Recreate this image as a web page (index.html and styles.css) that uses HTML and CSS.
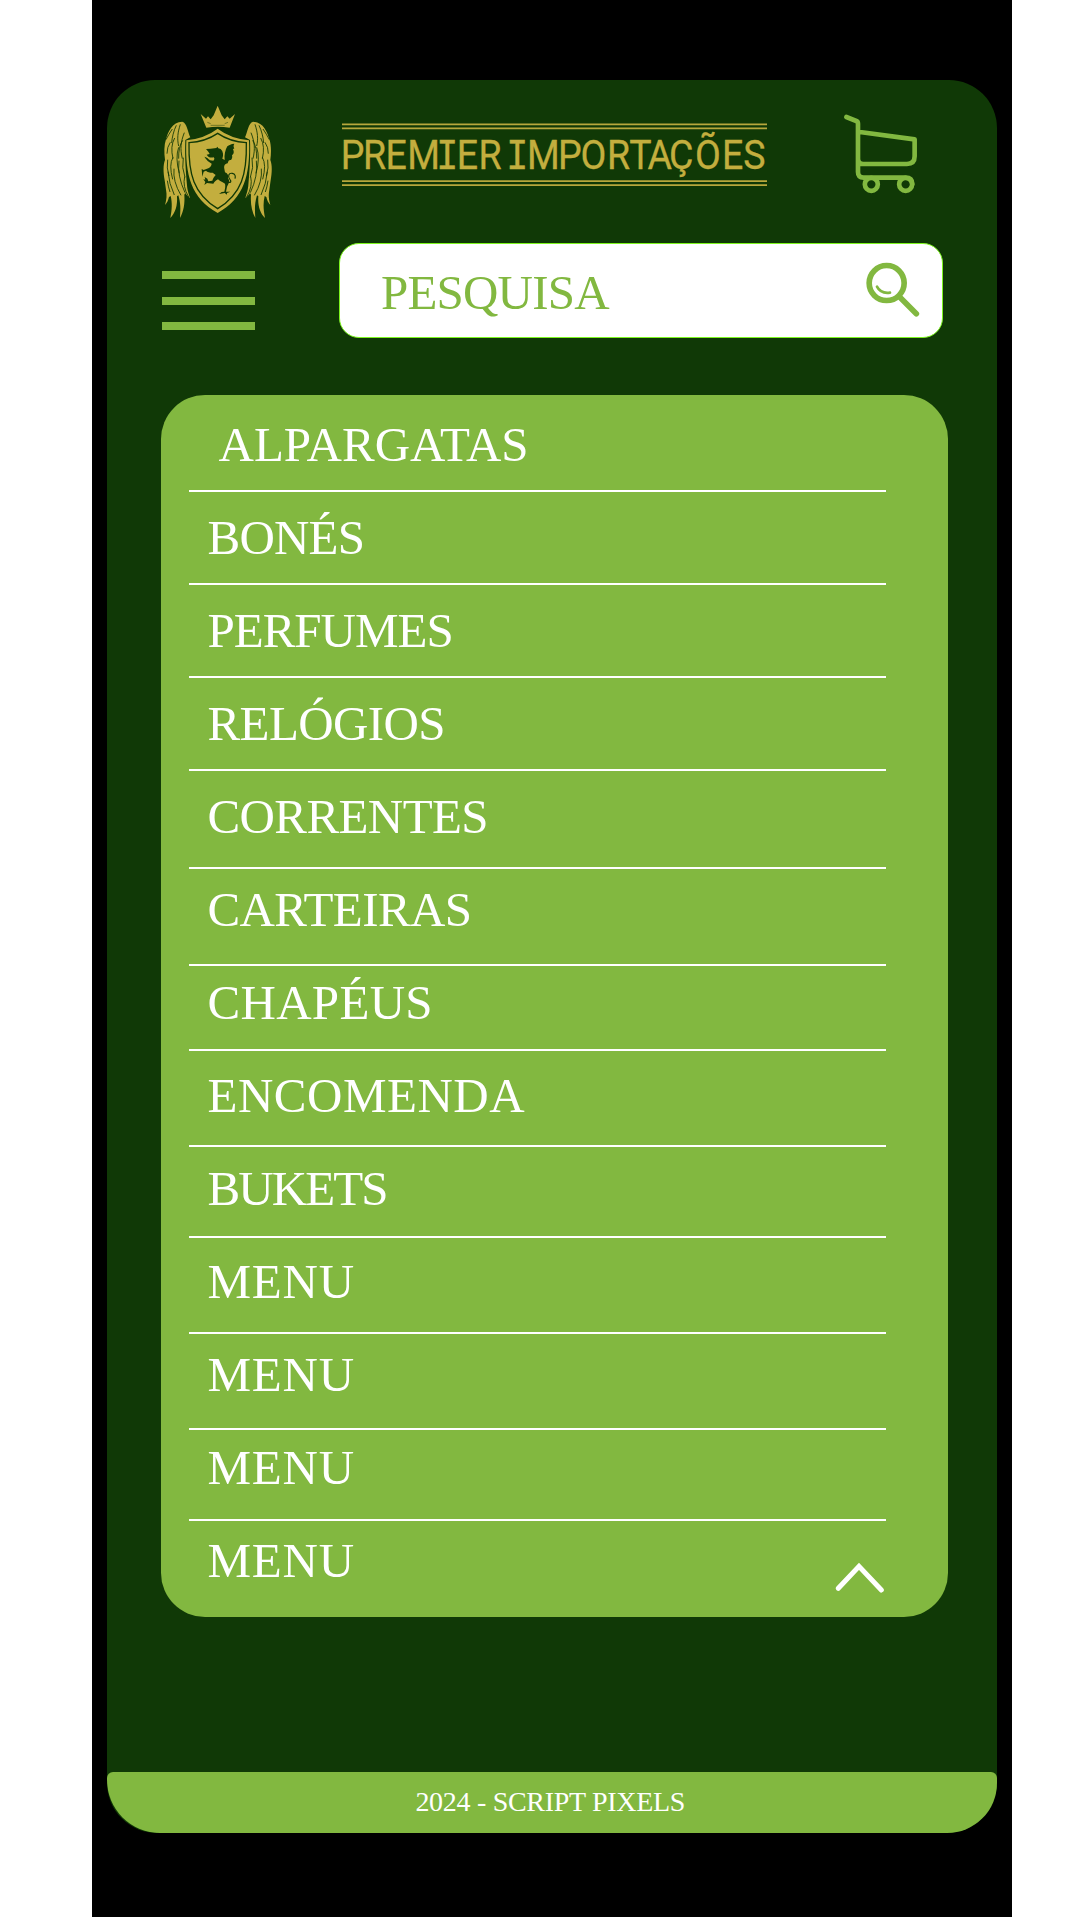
FILE: index.html
```
<!DOCTYPE html>
<html lang="pt-BR">
<head>
<meta charset="utf-8">
<title>Premier Importações</title>
<link rel="stylesheet" href="styles.css">
</head>
<body>
<div class="device">
  <div class="screen">
    <header class="header">
      <svg class="crest" viewBox="0 0 408 408" aria-hidden="true">
        <g fill="#c3ae3e">
          <path d="M152 72l16 14 6-7 8 9 9-12 12-29 12 29 9 12 8-9 7 7 16-14-16 41q-35-5-70 0z"/>
          <g id="wing">
            <path d="M97 95c14 4 16 30 24 47l-15 8c-2 55 2 100 5 135 1 15 4 22 9 39-7-5-11-10-14-15l-3 5c2 26-2 50-13 70 2-28 2-44-5-68l-4 3c2 28-5 50-20 65 5-26 6-45 1-66l-5 3c-2 10-6 18-12 24 5-17 6-30 3-46l-4-28c-4-24-5-46 1-61-3-22-3-45 3-62 6-22 18-52 49-53z"/>
            <path fill="none" stroke="#103906" stroke-width="2.6" d="M91 103c-8 24-10 44-5 65M79 106c-8 16-13 37-14 53M67 117c-8 12-14 22-19 32M103 128c-11 28-13 48-6 78M98 151q-13 20-12 55M74 144q-14 25-5 62M61 157q-10 14-10 34M86 172q-11 32 2 78M69 202q-13 22-1 66M100 203q-6 30 5 59M53 209q-4 25 4 49M87 212q-6 45 18 96M72 236q-4 38 21 80M54 245q3 36 19 70M104 260q-7 29 12 61M52 272q3 20 8 34"/>
          </g>
          <use href="#wing" transform="translate(406 0) scale(-1 1)"/>
          <path d="M203 116q38 29 94 35c4 105-14 173-94 218-80-45-98-113-94-218q56-6 94-35z"/>
        </g>
        <path d="M203 130q37 25 86 28c2 93-13 153-86 198-73-45-88-105-86-198q49-3 86-28z" fill="none" stroke="#103906" stroke-width="4"/>
        <path fill="#103906" d="M168 177l14-1 17-2 3-4 3 5 7 2c8 8 9 18 5 29l7 4c-2-15 2-31 8-41 5-4 11-7 21-8-3 5-3 10 0 14l-4 3c3 6 3 11 0 15l-3 3c2 6 0 10-3 14-6-1-8 2-10 10-7 1-12 6-10 16l2 11c9 4 11 10 9 18 5 7 5 12-3 25l-3 15 13 0-10 4 0 5-7-5-17 3 8-6 8-1c2-10 4-16 2-24-10-6-17-8-21-13-5 2-11 7-14 13l-19-2-8 6 3-9-6-8 6 1-2-8 8 5 3 8 12-2c2-8 6-12 10-17l-9-7c-9 0-16-2-20-6l-7 3-4 15-2-23 6 3 14-5c6-3 9-7 10-14l-12-8c-4-5-8-10-10-13 6 1 12 6 17 11l10 1c4-4 4-7 1-10-11 2-16-1-21-8l9-2-4-7z"/>
        <path d="M228 270c9 12 19 7 12-1-8-10-4-21 7-19 9 2 10 9 8 16" fill="none" stroke="#103906" stroke-width="3.5"/>
        <path d="M172 97l10 4M234 97l-10 4M182 106h42" fill="none" stroke="#103906" stroke-width="1.4"/>
      </svg>
      <svg class="brand" viewBox="342 120 425 70">
        <path class="rules" d="M342 124.4h425M342 128.4h425M342 181.2h425M342 185.2h425"/>
        <g transform="scale(.92 1)">
          <text class="wordmark" y="169" x="370.5 394.5 418.9 442.8 474.1 496.6 520">PREM<tspan class="slab">I</tspan>ER</text>
          <text class="wordmark" y="169" x="550.2 572.7 606.4 631 659.7 683.9 703.9 727.2 755.4 784.7 807.9"><tspan class="slab">I</tspan>MPORTAÇÕES</text>
        </g>
      </svg>
      <svg class="cart" viewBox="60 60 250 260" role="img" aria-label="Carrinho">
        <g fill="none" stroke="#82b840" stroke-width="14" stroke-linecap="round" stroke-linejoin="round">
          <path d="M79 81l30 12q5 2 5 8v145q0 17 17 17h126q20 0 20 20M114 125l170 23v51q0 23-23 23H130q-16 0-16-16"/>
          <circle cx="154" cy="283" r="19.5"/>
          <circle cx="257" cy="283" r="19.5"/>
        </g>
      </svg>
    </header>

    <div class="toolbar">
      <div class="burger"><i></i><i></i><i></i></div>
      <div class="search">
        <span class="search-label">PESQUISA</span>
        <svg class="lens" viewBox="195 95 165 170" aria-hidden="true">
          <g fill="none" stroke="#82b840" stroke-linecap="round">
            <circle cx="260" cy="161" r="52.5" stroke-width="17"/>
            <path d="M302 206l47 47" stroke-width="17"/>
            <path d="M231 172q11 22 39 18" stroke-width="8"/>
          </g>
        </svg>
      </div>
    </div>

    <nav class="menu">
      <ul>
        <li><span>ALPARGATAS</span></li>
        <li><span>BONÉS</span></li>
        <li><span>PERFUMES</span></li>
        <li><span>RELÓGIOS</span></li>
        <li><span>CORRENTES</span></li>
        <li><span>CARTEIRAS</span></li>
        <li><span>CHAPÉUS</span></li>
        <li><span>ENCOMENDA</span></li>
        <li><span>BUKETS</span></li>
        <li><span>MENU</span></li>
        <li><span>MENU</span></li>
        <li><span>MENU</span></li>
        <li><span>MENU</span>
          <svg class="chevron" viewBox="102 186 150 93" aria-hidden="true"><path d="M112 265l62-66 67 71" fill="none" stroke="#fff" stroke-width="15" stroke-linecap="round"/></svg>
        </li>
      </ul>
    </nav>

    <footer class="footer"><span>2024 - SCRIPT PIXELS</span></footer>
  </div>
</div>
</body>
</html>
```
FILE: styles.css
```
* { box-sizing: border-box; }

body {
  margin: 0;
  background: #fff;
  font-family: "Palatino Linotype", "Book Antiqua", "Liberation Serif", serif;
}

.device {
  width: 920.5px;
  height: 1916.5px;
  margin-left: 91.5px;
  padding: 80px 15.5px 84px 15.5px;
  background: #000;
}

.screen {
  display: flex;
  flex-direction: column;
  height: 1752.5px;
  border-radius: 48px 48px 50px 50px;
  background: #103906;
  overflow: hidden;
}

.header {
  display: flex;
  height: 162.5px;
  padding: 10px 0 0 43px;
}

.crest { width: 136px; height: 136px; }

.brand { width: 425px; height: 70px; margin: 30px 73px 0 56px; }
.rules { fill: none; stroke: #b7a83c; stroke-width: 1.8; }
.wordmark { font: 40.8px Roboto, sans-serif; fill: #c3ae3e; stroke: #c3ae3e; stroke-width: 0.3px; }
.slab { font: 39.8px "DejaVu Sans Mono", monospace; }

.cart { width: 83.3px; height: 86.7px; margin-top: 20px; }

.toolbar { display: flex; height: 95.5px; padding-left: 54.5px; }

.burger {
  display: flex;
  flex-direction: column;
  justify-content: space-between;
  width: 93.5px;
  height: 59px;
  margin: 28.5px 84px 0 0;
}
.burger i { height: 8px; background: #82b840; }

.search {
  display: flex;
  align-items: flex-start;
  justify-content: space-between;
  width: 604px;
  padding: 20px 22px 0 41px;
  border: 1px solid #7df51e;
  border-radius: 20px;
  background: #fff;
}
.search-label { color: #82b840; font-size: 49px; line-height: 58px; letter-spacing: -0.8px; }
.lens { width: 55px; height: 56.7px; margin-top: -2.5px; }

.menu {
  width: 787.5px;
  height: 1221.5px;
  margin: 57px 0 0 53.5px;
  padding: 0 62px 0 28.5px;
  border-radius: 44px;
  background: #82b840;
}
.menu ul {
  display: grid;
  grid-template-rows: 97px 93px 93px 93px 98px 97px 85px 96px 91px 96px 96px 91px 95px;
  margin: 0;
  padding: 0;
  list-style: none;
}
.menu li {
  display: flex;
  align-items: flex-start;
  justify-content: space-between;
  padding: 18px 0 0 18.5px;
  border-bottom: 2px solid #fff;
  color: #fff;
  font-size: 49px;
  line-height: 56px;
  letter-spacing: 0.8px;
}
.menu li:last-child { border-bottom: 0; }
.menu li:nth-child(1) { padding: 22px 0 0 29.5px; letter-spacing: 0; }
.menu li:nth-child(2) { letter-spacing: -0.8px; }
.menu li:nth-child(3) { letter-spacing: -1px; }
.menu li:nth-child(4),
.menu li:nth-child(5),
.menu li:nth-child(6) { letter-spacing: -0.6px; }
.menu li:nth-child(6) { padding-top: 13px; }
.menu li:nth-child(7) { padding-top: 9px; letter-spacing: 0.3px; }
.menu li:nth-child(8) { padding-top: 17px; letter-spacing: 0.5px; }
.menu li:nth-child(9) { padding-top: 14px; letter-spacing: -1.9px; }
.menu li:nth-child(10) { padding-top: 16px; }
.menu li:nth-child(11) { padding-top: 13px; }
.menu li:nth-child(12) { padding-top: 10px; }
.menu li:nth-child(13) { padding-top: 12px; }
.chevron { width: 50px; height: 31px; margin: 29px 1.5px 0 0; }

.footer {
  display: flex;
  justify-content: center;
  height: 60.5px;
  margin-top: auto;
  padding: 13px 3px 0 0;
  border-radius: 6px 6px 43px 53px;
  background: #82b840;
  color: #fff;
  font-size: 28px;
  line-height: 34px;
  letter-spacing: -0.3px;
}
```
